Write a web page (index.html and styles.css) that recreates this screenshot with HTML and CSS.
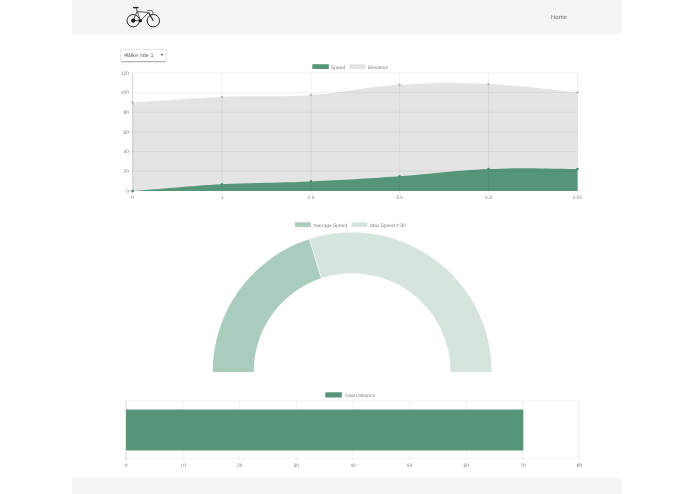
FILE: index.html
```html
<!DOCTYPE html>
<html lang="en">
<head>
  <meta charset="UTF-8" />
  <meta name="viewport" content="width=device-width, initial-scale=1.0"/>
  <title>Bike rides</title>
  <link rel="stylesheet" href="styles.css">
</head>
<body>
  <div class="page">
    <nav class="navbar">
      <svg class="logo" viewBox="125 5 38 24" width="38" height="24" aria-label="Bike logo">
        <g fill="none" stroke="#222" stroke-width="1">
          <circle cx="133.2" cy="20.7" r="6.2"/>
          <circle cx="153.3" cy="20.7" r="6.2"/>
          <path d="M133.2 20.7L137 11.5L148.5 12.5L140.5 20.7Z" stroke="#555"/>
          <path d="M140.5 20.7L136 8" stroke="#555"/>
          <path d="M133 7.6H138.5" stroke-width="1.4"/>
          <path d="M148.5 12.5L153.3 20.7" stroke-width="1.2"/>
          <path d="M147.7 10.5H150.5A2.1 2.1 0 1 1 149.2 13.8" stroke="#555"/>
        </g>
        <circle cx="133.2" cy="20.7" r="2.1" fill="#111"/>
        <circle cx="140.5" cy="20.7" r="1.5" fill="#111"/>
      </svg>
      <a class="nav-link" href="#">Home</a>
    </nav>

    <div class="select-wrap">
      <select class="ride-select">
        <option>#Bike ride 1</option>
      </select>
    </div>

    <!-- viewBox values are page coordinates -->
    <svg class="chart chart-line" viewBox="72 62 550 142" width="550" height="142">
      <rect class="swatch-dark" x="312.3" y="64.2" width="16.5" height="4.8"/>
      <text class="label" x="331" y="68.6">Speed</text>
      <rect class="swatch-grey" x="349" y="64.2" width="16.5" height="4.8"/>
      <text class="label" x="368" y="68.6">Elevation</text>

      <path class="fill-grey" d="M132.7 102.5C168.4 100.3 186.3 98.5 222 97C257.7 95.5 275.5 97.4 311 95C346.5 92.6 364.1 87 399.6 84.8C435.1 82.6 452.9 82.5 488.5 84C524.1 85.5 541.9 89.1 577.5 92.5V191H132.7Z"/>
      <path class="fill-green" d="M132.7 191C168.4 188.4 186.3 186.1 222 184.2C257.7 182.3 275.5 183 311 181.4C346.5 179.8 364.1 178.8 399.6 176.3C435.1 173.8 452.9 170.5 488.5 169C524.1 167.5 541.9 169 577.5 169V191H132.7Z"/>

      <g class="grid">
        <path d="M129 73H577.5M129 92.5H577.5M129 112.2H577.5M129 132H577.5M129 151.5H577.5M129 171.2H577.5"/>
        <path d="M222 73V194M311 73V194M399.6 73V194M488.5 73V194M577.5 73V194"/>
      </g>
      <path class="axis" d="M132.7 73V194M129 191H132.7"/>

      <g class="dots-grey">
        <circle cx="132.7" cy="102.5" r="1.3"/><circle cx="222" cy="97" r="1.3"/><circle cx="311" cy="95" r="1.3"/>
        <circle cx="399.6" cy="84.8" r="1.3"/><circle cx="488.5" cy="84" r="1.3"/><circle cx="577.5" cy="92.5" r="1.3"/>
      </g>
      <g class="dots-green">
        <circle cx="132.7" cy="191" r="1.3"/><circle cx="222" cy="184.2" r="1.3"/><circle cx="311" cy="181.4" r="1.3"/>
        <circle cx="399.6" cy="176.3" r="1.3"/><circle cx="488.5" cy="169" r="1.3"/><circle cx="577.5" cy="169" r="1.3"/>
      </g>

      <g class="label end">
        <text x="129" y="74.8">120</text><text x="129" y="94.3">100</text><text x="129" y="114">80</text>
        <text x="129" y="133.8">60</text><text x="129" y="153.3">40</text><text x="129" y="173">20</text><text x="129" y="192.8">0</text>
      </g>
      <g class="label mid">
        <text x="132.7" y="199">0</text><text x="222" y="199">1</text><text x="311" y="199">2.5</text>
        <text x="399.6" y="199">3.5</text><text x="488.5" y="199">4.3</text><text x="577.5" y="199">5.01</text>
      </g>
    </svg>

    <svg class="chart chart-gauge" viewBox="72 218 550 158" width="550" height="158">
      <rect class="swatch-mid" x="295" y="222.3" width="16" height="4.6"/>
      <text class="label" x="313.5" y="226.5">Average Speed</text>
      <rect class="swatch-light" x="351.5" y="222.3" width="16" height="4.6"/>
      <text class="label" x="370" y="226.5">Max Speed = 30</text>

      <path class="arc-mid" d="M212.7 372A139.5 139.5 0 0 1 309 239.3L321 278.3A98.5 98.5 0 0 0 253.7 372Z"/>
      <path class="arc-light" d="M309.6 239.1A139.5 139.5 0 0 1 491.7 372H450.7A98.5 98.5 0 0 0 321.6 278.1Z"/>
    </svg>

    <svg class="chart chart-bar" viewBox="72 389 550 85" width="550" height="85">
      <rect class="swatch-dark" x="325.3" y="392.3" width="16.5" height="5.2"/>
      <text class="label" x="344.5" y="396.9">Total Distance</text>

      <g class="grid-light">
        <path d="M123 401H579.5M123 458.3H579.5"/>
        <path d="M183 401V461M239.7 401V461M296.3 401V461M353 401V461M409.6 401V461M466.3 401V461M523 401V461M579.5 401V461"/>
      </g>
      <path class="axis-light" d="M126 401V461"/>
      <rect class="bar" x="126" y="409.5" width="397.3" height="41"/>
      <g class="label mid">
        <text x="126" y="466.8">0</text><text x="183" y="466.8">10</text><text x="239.7" y="466.8">20</text><text x="296.3" y="466.8">30</text>
        <text x="353" y="466.8">40</text><text x="409.6" y="466.8">50</text><text x="466.3" y="466.8">60</text><text x="523" y="466.8">70</text><text x="579.5" y="466.8">80</text>
      </g>
    </svg>

    <footer class="footer"></footer>
  </div>
</body>
</html>
```

FILE: styles.css
```css
html, body { margin: 0; padding: 0; background: #fff; }
body {
  font-family: 'Liberation Sans', Arial, sans-serif;
  color: #666;
  overflow: hidden;
  text-rendering: geometricPrecision;
}
.page { width: 550px; margin-left: 72px; }

.navbar {
  height: 34px;
  background: #f5f5f5;
  display: flex;
  justify-content: space-between;
  align-items: center;
  padding: 0 55px 0 53px;
}
.logo { display: block; filter: blur(.3px); }
.nav-link { color: #666; font-size: 6px; text-decoration: none; margin-top: 2px; filter: blur(.2px); }

.select-wrap {
  position: relative;
  width: 45px;
  height: 11px;
  margin: 16px 0 1px 49px;
  filter: blur(.25px);
}
.select-wrap::after {
  content: "";
  position: absolute;
  right: 3px;
  top: 4px;
  border-left: 1.5px solid transparent;
  border-right: 1.5px solid transparent;
  border-top: 2.5px solid #333;
}
.ride-select {
  appearance: none;
  display: block;
  width: 45px;
  height: 11px;
  padding: 0 0 0 3px;
  border: 0;
  border-radius: 1px;
  background: #fff;
  box-shadow: 0 0 1px rgba(0, 0, 0, .4), 0 .5px 1.5px rgba(0, 0, 0, .35);
  color: #666;
  font-family: inherit;
  font-size: 5.6px;
  text-rendering: geometricPrecision;
}

.chart { display: block; filter: blur(.25px); }
.chart-gauge { margin-top: 14px; }
.chart-bar { margin-top: 13px; }

.label { font-size: 4.9px; fill: #7c7c7c; }
.end { text-anchor: end; }
.mid { text-anchor: middle; }

.swatch-dark, .fill-green, .bar { fill: #55967a; }
.swatch-grey, .fill-grey { fill: #e4e4e4; }
.swatch-mid, .arc-mid { fill: #a9ccbd; }
.swatch-light, .arc-light { fill: #d5e5de; }

.grid path { fill: none; stroke: rgba(0, 0, 0, .07); stroke-width: .8; }
.grid-light path { fill: none; stroke: rgba(0, 0, 0, .07); stroke-width: .8; }
.axis { fill: none; stroke: rgba(0, 0, 0, .22); stroke-width: .8; }
.axis-light { fill: none; stroke: rgba(0, 0, 0, .2); stroke-width: .8; }

.dots-grey { fill: #b9b9b9; }
.dots-green { fill: #4a8a6e; }

.footer { height: 16px; margin-top: 4px; background: #f5f5f5; }
```
